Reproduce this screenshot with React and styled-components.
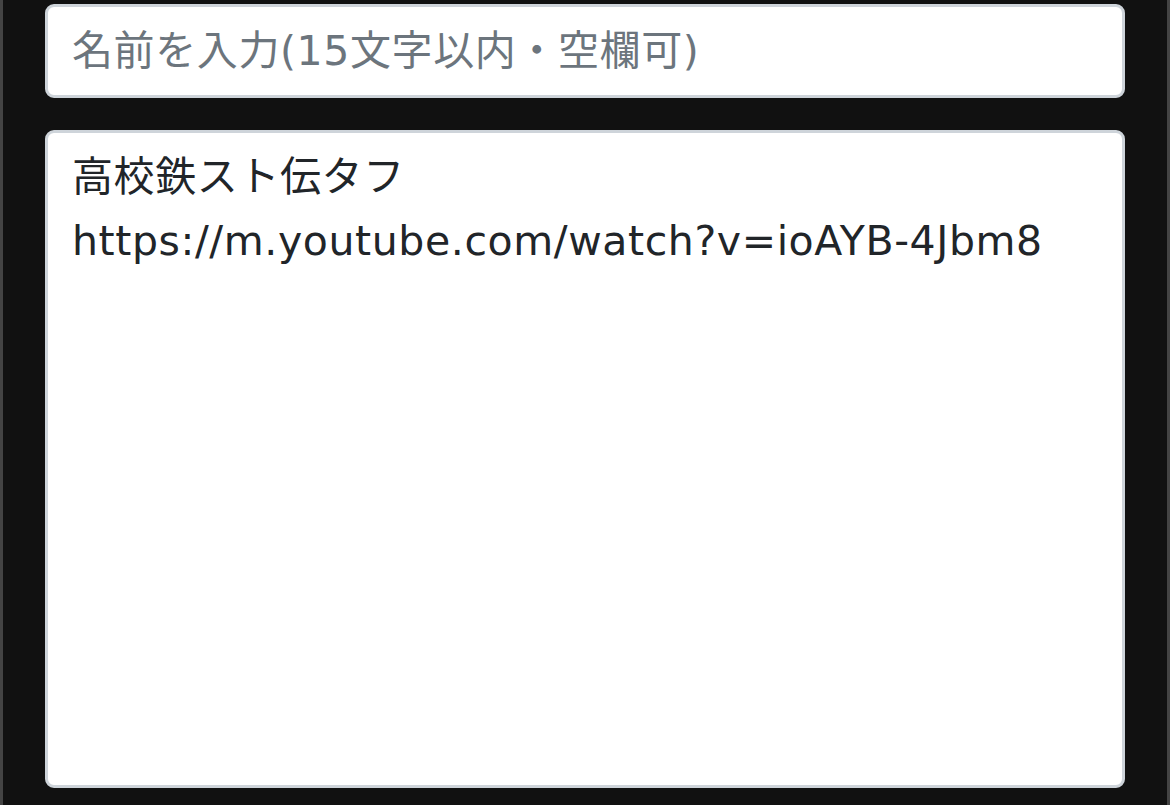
import styled, { createGlobalStyle } from "styled-components"

const GlobalStyle = createGlobalStyle`
html, body {
  margin: 0;
  padding: 0;
  background: #111111;
}
* {
  box-sizing: border-box;
}
`

const App = () => {
    return (<Page>
        <GlobalStyle />
        <Form>
            <NameInput type="text" placeholder="名前を入力(15文字以内・空欄可)" />
            <Body
                defaultValue={"高校鉄スト伝タフ\nhttps://m.youtube.com/watch?v=ioAYB-4Jbm8"}
            />
        </Form>
    </Page>)
}

const Page = styled.div`
width: 1170px;
height: 805px;
background: #111111;
border-left: 3px solid #444444;
border-right: 3px solid #444444;
overflow: hidden;
`
const Form = styled.div`
display: flex;
flex-direction: column;
gap: 32px;
padding: 4px 42px 0 42px;
`
const fieldBase = `
width: 100%;
background: #ffffff;
border: 3px solid #ced4da;
border-radius: 9px;
font-family: "DejaVu Sans", "Noto Sans CJK JP", sans-serif;
font-size: 41px;
letter-spacing: 0.6px;
color: #212529;
padding: 0 24px;
outline: none;
`
const NameInput = styled.input`
${fieldBase}
height: 94px;
&::placeholder {
  color: #6c757d;
}
`
const Body = styled.textarea`
${fieldBase}
height: 658px;
line-height: 64px;
padding-top: 12px;
resize: none;
`

export default App;
